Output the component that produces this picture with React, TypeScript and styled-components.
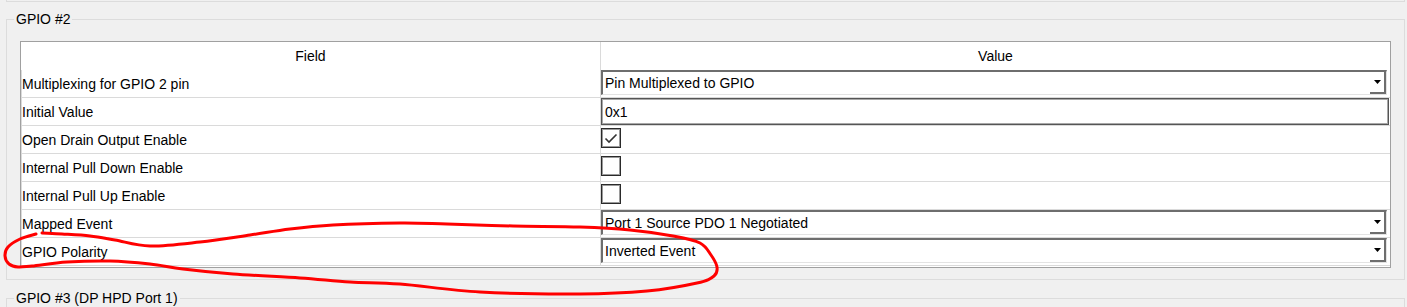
import React from "react";
import styled, { createGlobalStyle } from "styled-components";

type RowKind = "select" | "text" | "check";

interface GpioRowType {
  label: string;
  kind: RowKind;
  value?: string;
  checked?: boolean;
}

const GpioRows: GpioRowType[] = [
  { label: "Multiplexing for GPIO 2 pin", kind: "select", value: "Pin Multiplexed to GPIO" },
  { label: "Initial Value", kind: "text", value: "0x1" },
  { label: "Open Drain Output Enable", kind: "check", checked: true },
  { label: "Internal Pull Down Enable", kind: "check", checked: false },
  { label: "Internal Pull Up Enable", kind: "check", checked: false },
  { label: "Mapped Event", kind: "select", value: "Port 1 Source PDO 1 Negotiated" },
  { label: "GPIO Polarity", kind: "select", value: "Inverted Event" },
];

// hand drawn red loop round the "GPIO Polarity" row
const markPoints: [number, number][] = [
  [42, 233], [62, 234], [90, 236], [115, 240], [150, 246], [200, 242],
  [250, 235], [290, 229], [333, 225], [400, 223], [447, 224], [513, 226],
  [580, 227], [630, 230], [673, 236], [700, 243], [711, 255], [717, 267],
  [714, 276], [697, 283], [647, 291], [580, 294], [480, 292], [400, 284],
  [350, 282], [300, 278], [233, 274], [183, 269], [150, 264], [110, 261],
  [67, 262], [32, 266], [18, 267], [9, 264], [5, 256], [8, 247],
  [20, 239], [36, 234],
];

const toSmoothPath = (pts: [number, number][]) => {
  let d = `M ${pts[0][0]} ${pts[0][1]}`;
  for (let i = 0; i < pts.length - 1; i++) {
    const p0 = pts[i - 1] || pts[i];
    const p1 = pts[i];
    const p2 = pts[i + 1];
    const p3 = pts[i + 2] || p2;
    const c1x = p1[0] + (p2[0] - p0[0]) / 6;
    const c1y = p1[1] + (p2[1] - p0[1]) / 6;
    const c2x = p2[0] - (p3[0] - p1[0]) / 6;
    const c2y = p2[1] - (p3[1] - p1[1]) / 6;
    d += ` C ${c1x.toFixed(1)} ${c1y.toFixed(1)} ${c2x.toFixed(1)} ${c2y.toFixed(1)} ${p2[0]} ${p2[1]}`;
  }
  return d;
};

const GlobalStyle = createGlobalStyle`
  html, body {
    margin: 0;
    padding: 0;
    background: #f0f0f0;
    overflow: hidden;
  }
  body {
    font-family: "Liberation Sans", Arial, sans-serif;
    font-size: 14px;
    color: #000000;
  }
`;

const ValueEditor: React.FC<{ row: GpioRowType }> = ({ row }) => {
  if (row.kind === "select") {
    return (
      <S.SelectBox>
        <span>{row.value}</span>
        <S.DropButton>
          <svg width="7" height="4" viewBox="0 0 7 4">
            <path d="M0 0 H7 L3.5 4 Z" fill="#000000" />
          </svg>
        </S.DropButton>
      </S.SelectBox>
    );
  }
  if (row.kind === "text") {
    return <S.TextBox>{row.value}</S.TextBox>;
  }
  return (
    <S.CheckBox>
      {row.checked && (
        <svg width="18" height="17" viewBox="0 0 18 17">
          <path
            d="M3.5 8.5 L7 12 L14.5 4.5"
            fill="none"
            stroke="#333333"
            strokeWidth="1.6"
          />
        </svg>
      )}
    </S.CheckBox>
  );
};

const App: React.FC = () => {
  return (
    <S.Page>
      <GlobalStyle />
      <S.PrevGroupEdge />
      <S.GroupBox>
        <S.GroupTitle>GPIO #2</S.GroupTitle>
        <S.Table>
          <S.HeaderRow>
            <S.HeaderCell>Field</S.HeaderCell>
            <S.HeaderCell>Value</S.HeaderCell>
          </S.HeaderRow>
          {GpioRows.map((row) => (
            <S.Row key={row.label}>
              <S.FieldCell>{row.label}</S.FieldCell>
              <S.ValueCell>
                <ValueEditor row={row} />
              </S.ValueCell>
            </S.Row>
          ))}
        </S.Table>
      </S.GroupBox>
      <S.NextGroupBox>
        <S.GroupTitle>GPIO #3 (DP HPD Port 1)</S.GroupTitle>
      </S.NextGroupBox>
      <S.Marker width="1407" height="307" viewBox="0 0 1407 307">
        <path
          d={toSmoothPath(markPoints)}
          fill="none"
          stroke="#ff0000"
          strokeWidth="3"
          strokeLinecap="round"
          strokeLinejoin="round"
        />
      </S.Marker>
    </S.Page>
  );
};

const S = {
  Page: styled.div`
    position: relative;
    width: 1407px;
    height: 307px;
    overflow: hidden;
  `,
  PrevGroupEdge: styled.div`
    height: 1px;
    margin: 0 2px 0 6px;
    border: 1px solid #dcdcdc;
    border-top: none;
  `,
  GroupBox: styled.fieldset`
    margin: 10px 2px 0 6px;
    padding: 14px 13px 11px 13px;
    border: 1px solid #dcdcdc;
    min-width: 0;
  `,
  NextGroupBox: styled.fieldset`
    margin: 11px 2px 0 6px;
    padding: 0 13px;
    height: 60px;
    border: 1px solid #dcdcdc;
    min-width: 0;
  `,
  GroupTitle: styled.legend`
    padding: 0 2px;
    margin-left: -6px;
    line-height: 15px;
    font-size: 14px;
    color: #000000;
  `,
  Table: styled.div`
    border: 1px solid #a0a0a0;
    background: #ffffff;
    padding-bottom: 1px;
  `,
  HeaderRow: styled.div`
    display: grid;
    grid-template-columns: 580px 1fr;
    height: 28px;
  `,
  HeaderCell: styled.div`
    display: flex;
    align-items: center;
    justify-content: center;
    &:first-child {
      border-right: 1px solid #dadada;
    }
  `,
  Row: styled.div`
    display: grid;
    grid-template-columns: 580px 1fr;
    height: 28px;
    box-sizing: border-box;
    border-bottom: 1px solid #dadada;
  `,
  FieldCell: styled.div`
    display: flex;
    align-items: center;
    border-left: 1px solid #dadada;
    border-right: 1px solid #dadada;
    white-space: nowrap;
  `,
  ValueCell: styled.div`
    display: flex;
    align-items: flex-start;
    position: relative;
  `,
  SelectBox: styled.div`
    position: relative;
    box-sizing: border-box;
    width: calc(100% - 3px);
    height: 25px;
    display: flex;
    align-items: center;
    padding-left: 2px;
    border-top: 2px solid #6e6e6e;
    border-left: 2px solid #6e6e6e;
    border-right: 1px solid #e3e3e3;
    border-bottom: 1px solid #e3e3e3;
  `,
  DropButton: styled.div`
    position: absolute;
    top: 0;
    right: 0;
    bottom: 0;
    width: 16px;
    box-sizing: border-box;
    display: flex;
    align-items: center;
    justify-content: center;
    border-right: 2px solid #6e6e6e;
    border-bottom: 2px solid #6e6e6e;
    padding-bottom: 1px;
  `,
  TextBox: styled.div`
    box-sizing: border-box;
    width: calc(100% - 1px);
    height: 27px;
    display: flex;
    align-items: center;
    padding-left: 3px;
    border: 1px solid #555555;
    box-shadow: inset 0 0 0 1px #a8a8a8;
  `,
  CheckBox: styled.div`
    box-sizing: border-box;
    width: 20px;
    height: 20px;
    margin-top: 2px;
    display: flex;
    align-items: center;
    justify-content: center;
    border: 1px solid #2a2a2a;
    box-shadow: inset 0 0 0 1px #9a9a9a;
  `,
  Marker: styled.svg`
    position: absolute;
    top: 0;
    left: 0;
    pointer-events: none;
  `,
};

export default App;
